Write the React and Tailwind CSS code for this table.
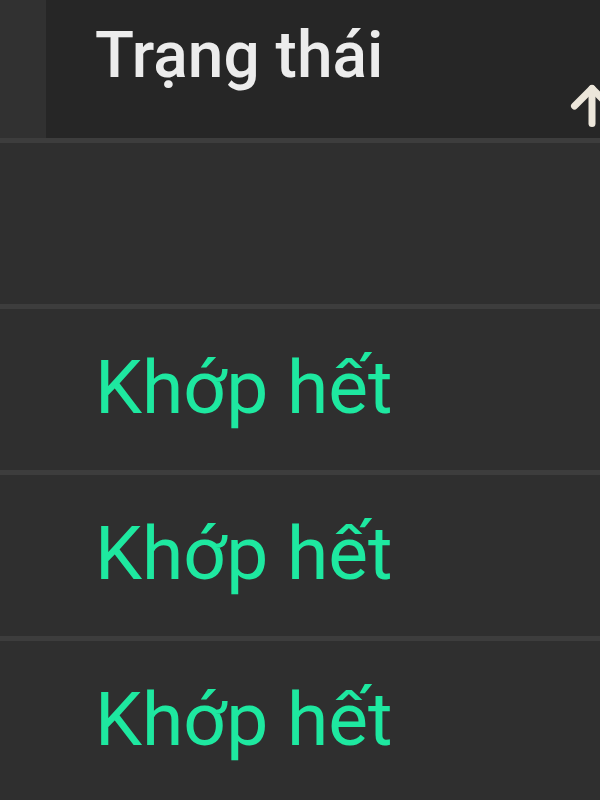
import { ArrowUp } from "lucide-react"

const rows = ["", "Khớp hết", "Khớp hết", "Khớp hết"]

export default function App() {
  return (
    <div className="w-[600px] h-[800px] overflow-hidden bg-[#2f2f2f] font-['Roboto',sans-serif]">
      <div className="flex h-[138px]">
        <div className="w-[46px] bg-[#313131]" />
        <div className="relative flex-1 bg-[#262626] pl-[49px] pt-[12px]">
          <span className="text-[64px] leading-[88px] font-medium text-[#ececec]">Trạng thái</span>
          <ArrowUp className="absolute right-[-22px] top-[76px] text-[#ece6da]" size={60} strokeWidth={2.8} />
        </div>
      </div>
      {rows.map((r, i) => (
        <div key={i} className="border-t-[5px] border-[#3d3d3d] h-[166px] flex items-center pl-[95px] pb-[4px]">
          <span className="text-[75px] leading-none text-[#1ee8a0]">{r}</span>
        </div>
      ))}
    </div>
  )
}
